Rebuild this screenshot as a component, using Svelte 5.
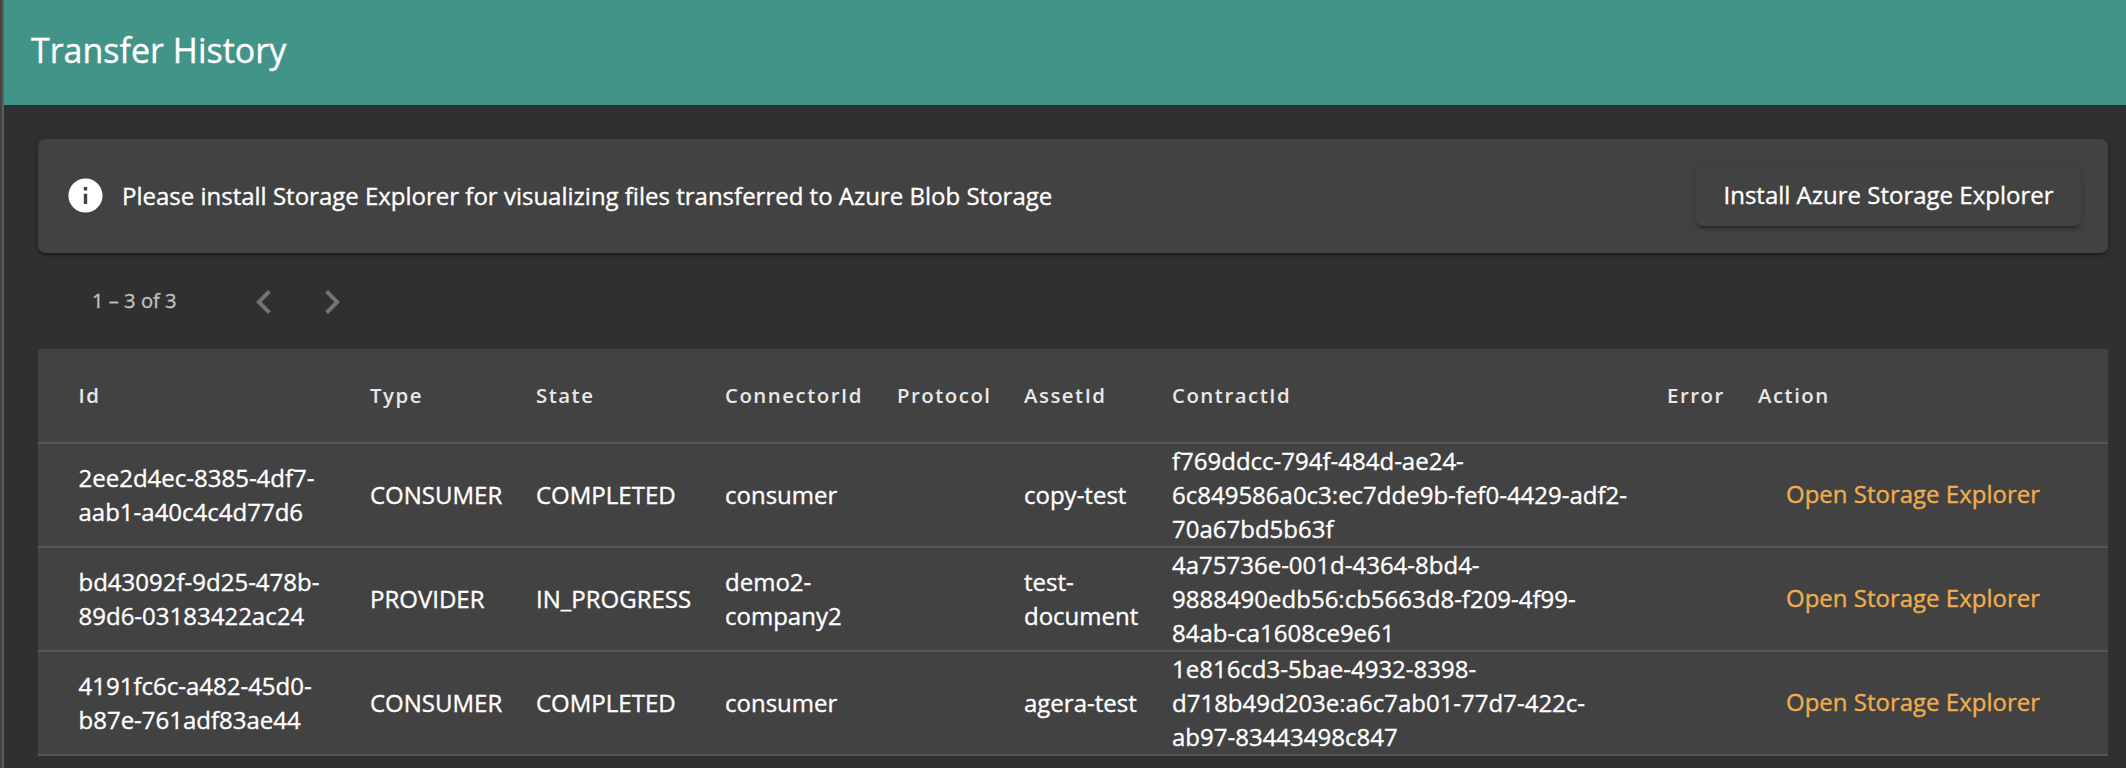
<script>
  const columns = ['Id', 'Type', 'State', 'ConnectorId', 'Protocol', 'AssetId', 'ContractId', 'Error', 'Action'];
  const rows = [
    [['2ee2d4ec-8385-4df7-', 'aab1-a40c4c4d77d6'], ['CONSUMER'], ['COMPLETED'], ['consumer'], [], ['copy-test'], ['f769ddcc-794f-484d-ae24-', '6c849586a0c3:ec7dde9b-fef0-4429-adf2-', '70a67bd5b63f'], []],
    [['bd43092f-9d25-478b-', '89d6-03183422ac24'], ['PROVIDER'], ['IN_PROGRESS'], ['demo2-', 'company2'], [], ['test-', 'document'], ['4a75736e-001d-4364-8bd4-', '9888490edb56:cb5663d8-f209-4f99-', '84ab-ca1608ce9e61'], []],
    [['4191fc6c-a482-45d0-', 'b87e-761adf83ae44'], ['CONSUMER'], ['COMPLETED'], ['consumer'], [], ['agera-test'], ['1e816cd3-5bae-4932-8398-', 'd718b49d203e:a6c7ab01-77d7-422c-', 'ab97-83443498c847'], []]
  ];
</script>

<div class="shell">
  <div class="sidenav"></div>
  <div class="content">
    <header class="toolbar"><h1>Transfer History</h1></header>
    <main>
      <section class="card">
        <svg class="info" viewBox="0 0 24 24"><path d="M12 2C6.48 2 2 6.48 2 12s4.48 10 10 10 10-4.48 10-10S17.52 2 12 2zm1 15h-2v-6h2v6zm0-8h-2V7h2v2z" /></svg>
        <span class="notice">Please install Storage Explorer for visualizing files transferred to Azure Blob Storage</span>
        <button class="raised">Install Azure Storage Explorer</button>
      </section>
      <nav class="paginator">
        <span class="range">1 – 3 of 3</span>
        <svg viewBox="0 0 24 24"><path d="M15.41 7.41L14 6l-6 6 6 6 1.41-1.41L10.83 12z" /></svg>
        <svg viewBox="0 0 24 24"><path d="M10 6L8.59 7.41 13.17 12l-4.58 4.59L10 18l6-6z" /></svg>
      </nav>
      <div class="table" role="table">
        <div class="row head" role="row">
          {#each columns as label}<div class="cell" role="columnheader">{label}</div>{/each}
        </div>
        {#each rows as row}
          <div class="row" role="row">
            {#each row as lines}
              <div class="cell" role="cell">{#each lines as line}<span>{line}</span>{/each}</div>
            {/each}
            <div class="cell" role="cell"><button class="link">Open Storage Explorer</button></div>
          </div>
        {/each}
      </div>
    </main>
  </div>
</div>

<style>
  :global(body) { background: #303030; overflow: hidden; }
  .shell { display: flex; height: 768px; color: #fff; font-family: "Open Sans", sans-serif; font-size: 24px; -webkit-text-stroke: 0.35px currentColor; }
  .sidenav { box-sizing: border-box; width: 4px; background: #424242; border-right: 2px solid #5e5e5e; }
  .content { flex: 1; min-width: 0; }
  .toolbar { display: flex; align-items: center; height: 105px; padding: 0 27px 6px; box-sizing: border-box; background: #439488; }
  h1 { margin: 0; font-size: 34px; font-weight: 400; white-space: nowrap; }
  main { padding: 34px 18px 0 34px; }
  .card { display: flex; align-items: center; box-sizing: border-box; height: 114px; padding: 0 27px 0 26.5px; border-radius: 7px; background: #424242; box-shadow: 0 3px 2px -2px rgba(0,0,0,.3), 0 2px 2px rgba(0,0,0,.2), 0 2px 5px rgba(0,0,0,.16); }
  .info { width: 41px; height: 41px; fill: #fff; margin: 0 16.5px 1px 0; }
  .notice { white-space: nowrap; padding-bottom: 2px; }
  button { font: inherit; border: 0; background: none; padding: 0; white-space: nowrap; }
  .raised { margin-left: auto; width: 385px; height: 60px; padding-bottom: 3px; border-radius: 7px; color: #fff; background: #424242; box-shadow: 0 5px 2px -3px rgba(0,0,0,.2), 0 3px 3px rgba(0,0,0,.14), 0 2px 8px rgba(0,0,0,.12); }
  .paginator { display: flex; align-items: center; height: 96px; padding-left: 54px; }
  .range { width: 148px; padding-bottom: 2px; font-size: 20.2px; color: #c1c1c1; white-space: nowrap; }
  .paginator svg { width: 48px; height: 48px; margin: 1px 20px 0 0; fill: #747474; }
  .table { background: #424242; }
  .row { display: grid; grid-template-columns: 332px 166px 189px 172px 127px 148px 495px 91px 1fr; height: 104px; box-sizing: border-box; border-bottom: 2px solid #565656; }
  .cell { display: flex; flex-direction: column; justify-content: center; align-items: flex-start; line-height: 34px; white-space: nowrap; }
  .cell:first-child { padding-left: 40.5px; }
  .head { height: 95px; font-size: 20.4px; font-weight: 600; letter-spacing: 1.5px; color: #e8e8e8; -webkit-text-stroke-width: 0; }
  .head .cell { padding-bottom: 2px; }
  .link { margin-left: 28px; padding-bottom: 2px; color: #f0ad4e; }
</style>
